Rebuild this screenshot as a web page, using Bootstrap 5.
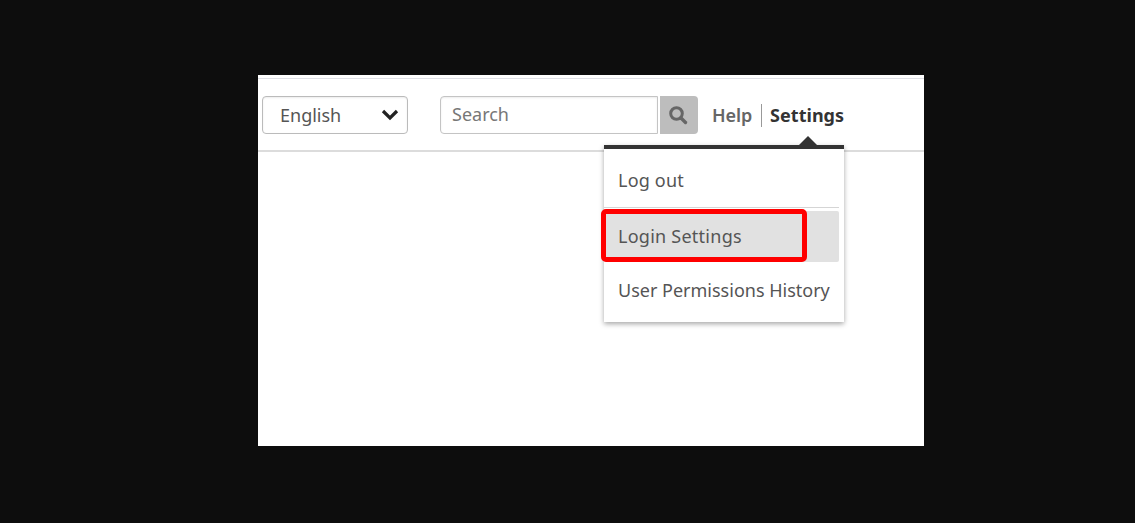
<!DOCTYPE html>
<html lang="en"><head><meta charset="utf-8"><title>Settings</title>
<link href="https://cdn.jsdelivr.net/npm/bootstrap@5.3.0/dist/css/bootstrap.min.css" rel="stylesheet">
<style>
html,body{height:100%;overflow:hidden}
body{background:#0d0d0d;font-family:"Noto Sans","Liberation Sans",sans-serif;color:#444;padding:75px 0 0 258px}
.sheet{width:666px;height:371px;background:#fff;position:relative;padding-top:3px}
.topbar{height:74px;border-top:1px solid #dfe0e6;border-bottom:2px solid #dcdcdc;padding:17px 0 0 4px}
.langbox{width:146px;height:38px;border:1px solid #bbb;border-radius:4px;padding-left:17px;font-size:18px;color:#555;box-shadow:inset 0 1px 2px rgba(0,0,0,.08)}
.searchbox{width:218px;height:38px;border:1px solid #c4c4c4;border-radius:4px 0 0 4px;padding:0 0 2px 11px;font-size:18px;color:#777;margin-left:32px;box-shadow:inset 0 1px 2px rgba(0,0,0,.08)}
.searchbtn{width:38px;height:38px;margin-left:2px;padding-right:3px;background:#bdbdbd;border-radius:0 4px 4px 0}
.helplink{font-size:18px;font-weight:600;color:#666;margin-left:14px;letter-spacing:-.1px}
.sep{width:1px;height:23px;background:#999;margin:0 8px 0 9px}
.setlink{font-size:18px;font-weight:700;color:#333;letter-spacing:.02px}
.navtexts{height:38px}
.menu{position:absolute;left:346px;top:70px;width:240px;height:177px;background:#fff;border-top:4px solid #333;box-shadow:0 2px 5px rgba(0,0,0,.35);font-size:18px;color:#555;padding-top:14px}
.menu::before{content:"";position:absolute;right:27px;top:-13px;border:9px solid transparent;border-top:0;border-bottom-color:#333}
.entry{padding-left:14px;white-space:nowrap}
.e1{height:45px;line-height:34px;border-bottom:1px solid #d5d5d5;margin-right:5px;letter-spacing:.2px}
.e2{height:51px;line-height:51px;background:#e1e1e1;margin:3px 5px 0 0;border-radius:2px;letter-spacing:.25px}
.e3{line-height:26px;padding-top:15px;letter-spacing:0}
.redmark{position:absolute;left:-3px;top:60px;width:206px;height:53px;border:5px solid #f00;border-radius:5px}
</style></head><body>
<div class="sheet">
 <div class="topbar d-flex align-items-start">
  <div class="langbox d-flex align-items-center justify-content-between"><span>English</span>
   <svg class="me-2" width="18" height="12" viewBox="0 0 18 12"><path d="M2 2l7 7 7-7" fill="none" stroke="#222" stroke-width="3.2"/></svg></div>
  <div class="searchbox d-flex align-items-center">Search</div>
  <div class="searchbtn d-flex align-items-center justify-content-center">
   <svg width="20" height="20" viewBox="0 0 20 20"><circle cx="8.5" cy="8.5" r="5.8" fill="none" stroke="#666" stroke-width="3"/><path d="M13 13l4.5 4.5" stroke="#666" stroke-width="3.4" stroke-linecap="round"/></svg></div>
  <div class="navtexts d-flex align-items-center"><span class="helplink">Help</span><span class="sep"></span><span class="setlink">Settings</span></div>
 </div>
 <div class="menu">
  <div class="entry e1">Log out</div>
  <div class="entry e2">Login Settings</div>
  <div class="entry e3">User Permissions History</div>
  <div class="redmark"></div>
 </div>
</div>
</body></html>
